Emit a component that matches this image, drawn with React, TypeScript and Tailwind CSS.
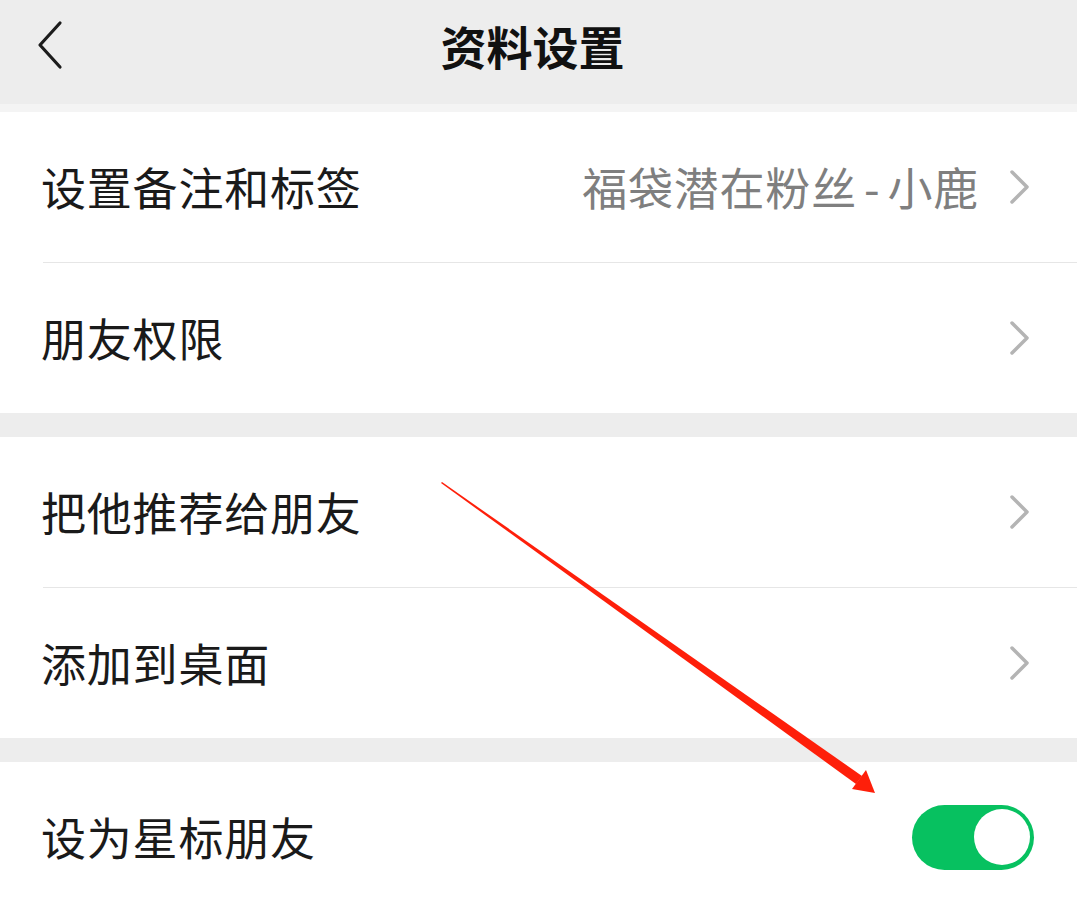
import React from "react";

const font = { fontFamily: '"Noto Sans CJK SC", "Noto Sans", sans-serif' };

function Chevron() {
  return (
    <svg width="22" height="34" viewBox="0 0 22 34" className="shrink-0">
      <path d="M3 2 L18 17 L3 32" fill="none" stroke="#b4b4b4" strokeWidth="3.5" strokeLinecap="round" strokeLinejoin="round" />
    </svg>
  );
}

function Row({ label, value, last }: { label: string; value?: React.ReactNode; last?: boolean }) {
  return (
    <div className="bg-white">
      <div className="flex h-[150px] items-center pl-[41px] pr-[46px]">
        <span className="flex-1 text-[45px] tracking-[0.8px] text-[#1a1a1a]">{label}</span>
        {value && <span className="mr-[30px] text-[45px] tracking-[0.8px] text-[#7f7f7f]">{value}</span>}
        <Chevron />
      </div>
      {!last && <div className="ml-[43px] h-px bg-[#e6e6e6]" />}
    </div>
  );
}

export default function App() {
  return (
    <div className="relative h-[906px] w-[1077px] overflow-hidden bg-[#ededed]" style={font}>
      <header className="relative flex h-[104px] items-center justify-center bg-[#ededed] pb-[14px] pr-[12px]">
        <svg width="30" height="50" viewBox="0 0 30 50" className="absolute left-[35px] top-[20px]">
          <path d="M25 3 L5 25 L25 47" fill="none" stroke="#1c1c1c" strokeWidth="3.2" strokeLinecap="round" strokeLinejoin="round" />
        </svg>
        <h1 className="text-[46px] font-semibold text-[#111]">资料设置</h1>
      </header>
      <div className="h-[8px] bg-[#f4f4f4]" />

      <Row
        label="设置备注和标签"
        value={
          <>
            福袋潜在粉丝<span className="px-[7px]">-</span>小鹿
          </>
        }
      />
      <Row label="朋友权限" last />

      <div className="h-[24px]" />

      <Row label="把他推荐给朋友" />
      <Row label="添加到桌面" last />

      <div className="h-[24px]" />

      <div className="flex h-[150px] items-center bg-white pl-[41px] pr-[43px]">
        <span className="flex-1 text-[45px] tracking-[0.8px] text-[#1a1a1a]">设为星标朋友</span>
        <div className="flex h-[65px] w-[122px] items-center justify-end rounded-full bg-[#07c160] pr-[4px]">
          <div className="h-[56px] w-[56px] rounded-full bg-white" />
        </div>
      </div>
      <div className="h-[200px] bg-white" />

      {/* red annotation arrow */}
      <svg width="1077" height="906" className="pointer-events-none absolute left-0 top-0">
        <polygon points="441,483 442,482 862,776 856,784" fill="#fe1f0a" />
        <polygon points="875,793 852,789 866,770" fill="#fe1f0a" />
      </svg>
    </div>
  );
}
